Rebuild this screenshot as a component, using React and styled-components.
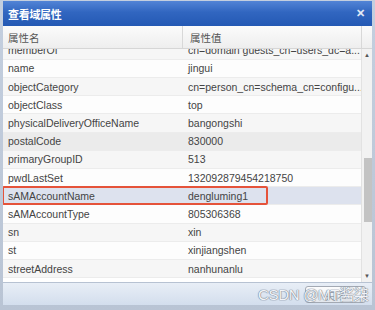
import React from 'react';
import styled, { createGlobalStyle } from 'styled-components';

const GlobalStyle = createGlobalStyle`
    body {
        margin: 0;
        background: #d5dbe5;
        font-family: "Liberation Sans", Arial, "Noto Sans CJK SC", sans-serif;
    }
`

const rows = [
    ['memberOf', 'cn=domain guests_cn=users_dc=a...'],
    ['name', 'jingui'],
    ['objectCategory', 'cn=person_cn=schema_cn=configu...'],
    ['objectClass', 'top'],
    ['physicalDeliveryOfficeName', 'bangongshi'],
    ['postalCode', '830000', 'hover'],
    ['primaryGroupID', '513'],
    ['pwdLastSet', '132092879454218750'],
    ['sAMAccountName', 'dengluming1', 'selected'],
    ['sAMAccountType', '805306368'],
    ['sn', 'xin'],
    ['st', 'xinjiangshen'],
    ['streetAddress', 'nanhunanlu'],
]

const Window = styled.div`
    width: 375px;
    height: 310px;
    box-sizing: border-box;
    padding: 1px 3px 5px;
    background: linear-gradient(#c4cfdf, #b9c4d4);
    display: flex;
    flex-direction: column;
    position: relative;
    overflow: hidden;
`

const TitleBar = styled.div`
    height: 25px;
    flex: none;
    display: flex;
    align-items: center;
    justify-content: space-between;
    padding: 0 7px 0 5px;
    background: linear-gradient(#5284d6, #3166c0 45%, #2459b4);
    color: #fff;
`

const Title = styled.span`
    font-family: "Noto Sans CJK SC", sans-serif;
    font-size: 11px;
    font-weight: 700;
    letter-spacing: -0.3px;
`

const Close = styled.span`
    font-size: 11px;
    font-weight: 700;
    color: #e3eaf6;
`

const Panel = styled.div`
    flex: 1;
    display: flex;
    flex-direction: column;
    background: #fff;
    min-height: 0;
`

const HeaderRow = styled.div`
    height: 23px;
    flex: none;
    display: grid;
    grid-template-columns: 180px 179px 1fr;
    background: linear-gradient(#fbfbfb, #eeeeee);
    border-bottom: 1px solid #d6d6d6;
    box-sizing: border-box;
`

const HeaderCell = styled.div`
    display: flex;
    align-items: center;
    padding-left: ${props => props.$pad || 5}px;
    font-family: "Noto Sans CJK SC", sans-serif;
    font-size: 10.5px;
    color: #555;
    border-right: ${props => props.$last ? 'none' : '1px solid #d8d8d8'};
`

const Body = styled.div`
    flex: 1;
    display: flex;
    min-height: 0;
`

const List = styled.div`
    flex: 1;
    overflow: hidden;
`

const Row = styled.div`
    height: 18.2px;
    box-sizing: border-box;
    display: grid;
    grid-template-columns: 180px 1fr;
    align-items: center;
    position: relative;
    font-size: 10.5px;
    color: #444;
    border-bottom: 1px solid #ececec;
    background: ${props => {
        if(props.$state === 'selected'){
            return '#dde2ee'
        } else if(props.$state === 'hover'){
            return '#ebebeb'
        }
        return props.$odd ? '#f6f6f6' : '#fdfdfd'
    }};
    &:first-child {
        margin-top: -7.3px;
    }
`

const Cell = styled.div`
    padding-left: 5px;
    white-space: nowrap;
    overflow: hidden;
`

const Highlight = styled.div`
    position: absolute;
    left: -1px;
    top: -1px;
    width: 266px;
    bottom: -1px;
    border: 2px solid #e5533a;
    border-radius: 2px;
    box-sizing: border-box;
    pointer-events: none;
`

const ScrollBar = styled.div`
    width: 10px;
    flex: none;
    display: flex;
    flex-direction: column;
    align-items: center;
    background: #f2f2f2;
    border-left: 1px solid #e2e2e2;
`

const Arrow = styled.div`
    height: 12px;
    display: flex;
    align-items: center;
    justify-content: center;
    font-size: 6px;
    color: #555;
`

const Track = styled.div`
    flex: 1;
    width: 100%;
    display: flex;
    flex-direction: column;
`

const Thumb = styled.div`
    margin-top: 97px;
    height: 64px;
    margin-left: 2px;
    width: 8px;
    background: #c3c3c3;
`

const Footer = styled.div`
    height: 22px;
    flex: none;
    display: flex;
    align-items: center;
    justify-content: flex-end;
    padding-right: 6px;
    background: linear-gradient(#e8eef6, #d3deed);
    border-top: 1px solid #b7c2d2;
`

const Button = styled.button`
    width: 61px;
    height: 17px;
    padding: 0;
    border: 1px solid #a3a9b3;
    border-radius: 3px;
    background: linear-gradient(#fdfdfd, #e2e6ec);
    font-family: "Noto Sans CJK SC", sans-serif;
    font-size: 11px;
    color: #9aa0a8;
`

const Watermark = styled.div`
    position: absolute;
    left: 258px;
    top: 283px;
    font-family: "Liberation Sans", "Noto Sans CJK SC", sans-serif;
    font-size: 15px;
    color: #f2f4f8;
    text-shadow: 0 0 1px #7d8796, 0 0 1px #7d8796, 0 0 1px #7d8796;
    letter-spacing: -0.3px;
`

export default function App() {
    return (
        <Window>
            <GlobalStyle />
            <TitleBar>
                <Title>查看域属性</Title>
                <Close>✕</Close>
            </TitleBar>
            <Panel>
                <HeaderRow>
                    <HeaderCell>属性名</HeaderCell>
                    <HeaderCell $pad={7}>属性值</HeaderCell>
                    <HeaderCell $last />
                </HeaderRow>
                <Body>
                    <List>
                        {rows.map(([key, value, state], i) => (
                            <Row key={key} $state={state} $odd={i % 2 === 0}>
                                <Cell>{key}</Cell>
                                <Cell>{value}</Cell>
                                {state === 'selected' && <Highlight />}
                            </Row>
                        ))}
                    </List>
                    <ScrollBar>
                        <Arrow>▲</Arrow>
                        <Track>
                            <Thumb />
                        </Track>
                        <Arrow>▼</Arrow>
                    </ScrollBar>
                </Body>
                <Footer>
                    <Button>关闭</Button>
                </Footer>
            </Panel>
            <Watermark>CSDN @MT酱柒</Watermark>
        </Window>
    )
}
